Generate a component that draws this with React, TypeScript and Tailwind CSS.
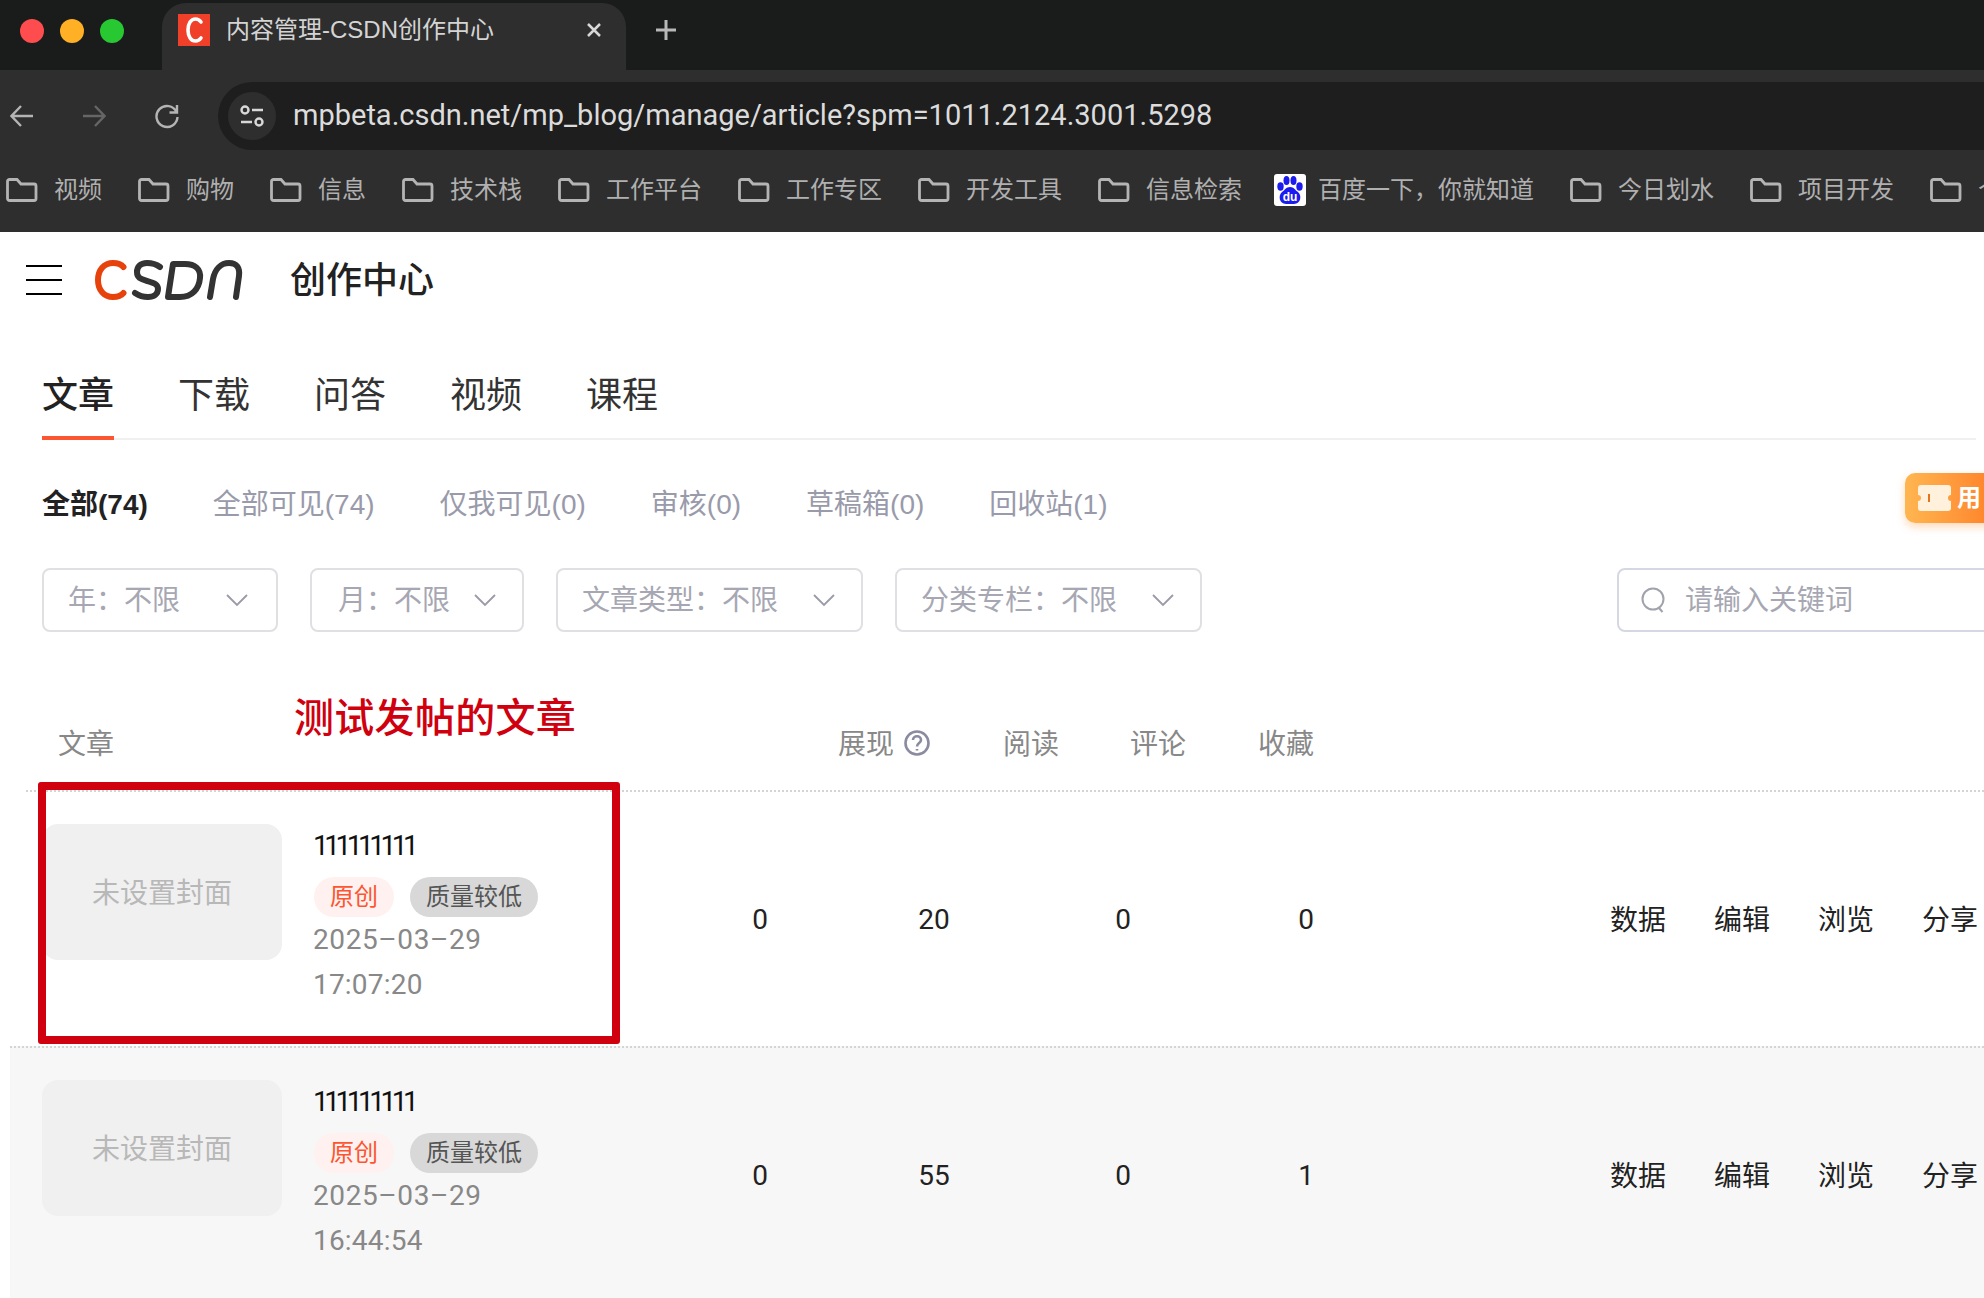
import React from 'react';

const cjk = "font-['Liberation_Sans','Noto_Sans_CJK_SC',sans-serif]";
const num = "font-['Roboto','Noto_Sans_CJK_SC',sans-serif]";

const bookmarks = ['视频', '购物', '信息', '技术栈', '工作平台', '工作专区', '开发工具', '信息检索'];
const bookmarksAfter = ['今日划水', '项目开发', '个人'];
const tabs = ['文章', '下载', '问答', '视频', '课程'];
const subTabs = ['全部可见(74)', '仅我可见(0)', '审核(0)', '草稿箱(0)', '回收站(1)'];
const actions = ['数据', '编辑', '浏览', '分享'];

const FolderIcon = () => (
  <svg width="32" height="24" viewBox="0 0 32 24" fill="none" stroke="#b4b4b4" strokeWidth="2.800" className="shrink-0">
    <path d="M1.500 3.500a2 2 0 0 1 2-2h7.500l4 4.500h13a2 2 0 0 1 2 2v12.500a2 2 0 0 1-2 2h-24.500a2 2 0 0 1-2-2z" />
  </svg>
);

const BaiduIcon = () => (
  <svg width="32" height="32" viewBox="0 0 32 32" className="shrink-0">
    <rect width="32" height="32" rx="3" fill="#fff" />
    <g fill="#1c1cf0">
      <ellipse cx="6.500" cy="12.500" rx="3.200" ry="4.200" />
      <ellipse cx="12.500" cy="6.500" rx="3" ry="4.500" />
      <ellipse cx="19.500" cy="6.500" rx="3" ry="4.500" />
      <ellipse cx="25.500" cy="12.500" rx="3.200" ry="4.200" />
      <path d="M16 13c4 0 5 3 8 5 4 3 3 12-4 12H12c-7 0-8-9-4-12 3-2 4-5 8-5z" />
    </g>
    <text x="16" y="27" textAnchor="middle" fontSize="12" fontWeight="700" fill="#fff" fontFamily="Liberation Sans">du</text>
  </svg>
);

const Chevron = () => (
  <svg width="22" height="13" viewBox="0 0 22 13" fill="none" stroke="#9a9aa8" strokeWidth="1.800" className="shrink-0">
    <path d="M1 1l10 10L21 1" />
  </svg>
);

const Logo = () => (
  <svg width="150" height="42" viewBox="0 0 150 42" fill="none" strokeWidth="6" strokeLinecap="round" strokeLinejoin="round">
    <path d="M29.500 8C27 5 23 4 19 4 10 4 4 11 4 21s6 17 15 17c4 0 8-1 10.500-4" stroke="#e8420c" />
    <path d="M66 8c-4-3-8-4-13-4-7 0-10 4-10 9 0 6 4 7 10 9 7 2 11 3 11 8 0 5-4 8-10 8-5 0-10-2-13-4" stroke="#333" />
    <path d="M79 5h12c10 0 16 5 15 14-1 11-8 19-20 19H74z" stroke="#333" />
    <path d="M116 38l3-18c2-10 8-16 16-16 8 0 11 5 10 13l-3 21" stroke="#333" />
  </svg>
);

const Filter = ({ label, className }: { label: string; className: string }) => (
  <div className={`flex h-16 shrink-0 items-center justify-between rounded-lg border-2 border-[#e0e0e4] text-[28px] text-[#a6a7b2] ${className}`}>
    <span className="pt-[2px]">{label}</span>
    <Chevron />
  </div>
);

const Article = ({ time, stats, dark }: { time: string; stats: string[]; dark?: boolean }) => (
  <div className={`flex h-[256px] border-t-2 border-dotted border-[#d4d4d4] ${dark ? 'ml-[10px] bg-[#f7f7f7] pl-8' : 'ml-[26px] pl-4'}`}>
    <div className="mt-8 flex h-[136px] w-60 items-center justify-center rounded-2xl bg-[#f0f0f0] pt-1 text-[28px] text-[#b8b8b8]">未设置封面</div>
    <div className="ml-8 w-[346px] pt-[34px]">
      <div className={`-ml-px text-[28px] leading-10 tracking-[-4.500px] text-[#111] ${num}`}>111111111</div>
      <div className="mt-[11px] flex gap-4 text-2xl leading-10">
        <span className="rounded-full bg-[#fff1ef] px-4 text-[#fc5531]">原创</span>
        <span className="rounded-full bg-[#d8d8d8] px-4 text-[#555]">质量较低</span>
      </div>
      <div className={`-ml-px text-[28px] leading-[45px] tracking-[0.6px] text-[#888] ${num}`}>2025–03–29</div>
      <div className={`-ml-px text-[28px] leading-[45px] tracking-[0.2px] text-[#888] ${num}`}>{time}</div>
    </div>
    <div className="flex flex-1 items-center text-[28px] text-[#222]">
      <span className={`w-[200px] pt-[2px] text-center ${num}`}>{stats[0]}</span>
      <span className={`w-[148px] pt-[2px] text-center ${num}`}>{stats[1]}</span>
      <span className={`w-[230px] pt-[2px] text-center ${num}`}>{stats[2]}</span>
      <span className={`w-[136px] pt-[2px] text-center ${num}`}>{stats[3]}</span>
      <div className="ml-auto flex gap-12 pr-[6px] pt-1">
        {actions.map((a) => <span key={a}>{a}</span>)}
      </div>
    </div>
  </div>
);

export default function App() {
  return (
    <div className={`relative h-[1298px] w-[1984px] overflow-hidden bg-white ${cjk}`}>
      {/* tab strip */}
      <div className="flex h-[70px] bg-[#1a1c1b]">
        <div className="flex w-[162px] shrink-0 items-center gap-4 pb-2 pl-5">
          <span className="h-6 w-6 rounded-full bg-[#ff4d4f]" />
          <span className="h-6 w-6 rounded-full bg-[#ffb024]" />
          <span className="h-6 w-6 rounded-full bg-[#28c832]" />
        </div>
        <div className="mt-[3px] flex h-[67px] w-[464px] items-center rounded-t-3xl bg-[#2e2e2e] pb-[13px] pl-4">
          <svg width="32" height="32" viewBox="0 0 32 32" className="shrink-0">
            <rect width="32" height="32" fill="#f0402a" />
            <path d="M23 8c-1.500-2-3.500-3-5.500-3C13 5 10 9.500 10 16s3 11 7.500 11c2 0 4-1 5.500-3" fill="none" stroke="#fff" strokeWidth="3.600" strokeLinecap="round" />
          </svg>
          <span className="ml-4 text-2xl text-[#d4d4d4]">内容管理-CSDN创作中心</span>
          <svg width="16" height="16" viewBox="0 0 16 16" stroke="#d8d8d8" strokeWidth="2.500" className="ml-auto mr-6">
            <path d="M2 2l12 12M14 2L2 14" />
          </svg>
        </div>
        <svg width="24" height="24" viewBox="0 0 24 24" stroke="#b8b8b8" strokeWidth="3" className="ml-7 mt-[18px]">
          <path d="M12 2v20M2 12h20" />
        </svg>
      </div>

      {/* toolbar */}
      <div className="h-[162px] bg-[#2e2e2e]">
        <div className="flex h-[80px] items-center pt-3">
          <div className="flex w-[218px] shrink-0 items-center pl-[10px]">
            <svg width="24" height="24" viewBox="0 0 24 24" fill="none" stroke="#b4b4b4" strokeWidth="2.400">
              <path d="M23 12H2M11 2L1.500 12l9.500 10" />
            </svg>
            <svg width="24" height="24" viewBox="0 0 24 24" fill="none" stroke="#666" strokeWidth="2.400" className="ml-12">
              <path d="M1 12h21M13 2l9.500 10L13 22" />
            </svg>
            <svg width="26" height="26" viewBox="0 0 26 26" fill="none" stroke="#b4b4b4" strokeWidth="2.400" className="ml-12">
              <path d="M22.500 9A10.500 10.500 0 1 0 23.500 14M23 2v7.500h-7.500" />
            </svg>
          </div>
          <div className="flex h-[68px] flex-1 items-center rounded-l-[34px] bg-[#1e1e1e] pl-[10px]">
            <span className="flex h-12 w-12 items-center justify-center rounded-full bg-[#2e2e2e]">
              <svg width="24" height="24" viewBox="0 0 24 24" fill="none" stroke="#d8d8d8" strokeWidth="2.400">
                <circle cx="5" cy="6" r="3.500" />
                <path d="M12 6h11M1 18h11" />
                <circle cx="19" cy="18" r="3.500" />
              </svg>
            </span>
            <span className={`ml-[17px] text-[29px] text-[#dcdcdc] ${num}`}>mpbeta.csdn.net/mp_blog/manage/article?spm=1011.2124.3001.5298</span>
          </div>
        </div>
        <div className="flex h-[82px] items-center gap-9 whitespace-nowrap pb-[2px] pl-[6px] text-2xl text-[#b0b0b0]">
          {bookmarks.map((b) => (
            <div key={b} className="flex items-center gap-4"><FolderIcon />{b}</div>
          ))}
          <div className="-ml-[4px] flex items-center gap-3"><BaiduIcon />百度一下，你就知道</div>
          {bookmarksAfter.map((b) => (
            <div key={b} className="flex items-center gap-4"><FolderIcon />{b}</div>
          ))}
        </div>
      </div>

      {/* page header */}
      <div className="flex h-24 items-center pl-[26px]">
        <div className="flex w-9 flex-col gap-[12px]">
          <span className="h-[2px] bg-black" />
          <span className="h-[2px] bg-black" />
          <span className="h-[2px] bg-black" />
        </div>
        <div className="ml-8"><Logo /></div>
        <div className="ml-[46px] pt-[2px] text-4xl font-medium text-[#222]">创作中心</div>
      </div>

      <div className="ml-[42px] mr-2">
        <div className="flex h-28 gap-16 border-b-2 border-[#f0f0f0]">
          {tabs.map((t, i) => (
            <div key={t} className={`-mb-[2px] h-28 pt-[50px] text-4xl leading-9 ${i === 0 ? 'border-b-4 border-[#fc5531] font-medium text-[#222]' : 'text-[#333]'}`}>{t}</div>
          ))}
        </div>
        <div className="mt-[45px] flex gap-[65px] text-[28px] leading-10 text-[#999aaa]">
          <span className="font-semibold text-[#222]">全部(74)</span>
          {subTabs.map((t) => <span key={t}>{t}</span>)}
        </div>
        <div className="mt-[43px] flex gap-8">
          <Filter label="年：不限" className="w-[236px] pl-6 pr-7" />
          <Filter label="月：不限" className="w-[214px] pl-[26px] pr-[26px]" />
          <Filter label="文章类型：不限" className="w-[307px] pl-6 pr-[26px]" />
          <Filter label="分类专栏：不限" className="w-[307px] pl-6 pr-[26px]" />
          <div className="ml-[383px] flex h-16 w-[400px] shrink-0 items-center gap-5 rounded-lg border-2 border-[#d5d8e4] pl-[22px] text-[28px] text-[#a6a7b2]">
            <svg width="24" height="26" viewBox="0 0 24 26" fill="none" stroke="#a0a3ad" strokeWidth="2">
              <circle cx="12" cy="12" r="10.500" />
              <path d="M18 21l3.500 4" />
            </svg>
            <span className="pt-[2px]">请输入关键词</span>
          </div>
        </div>
      </div>

      {/* table head */}
      <div className="ml-[58px] mt-[91px] flex h-[67px] pt-[2px] text-[28px] leading-10 text-[#888]">
        <span className="w-[780px]">文章</span>
        <span className="flex w-[165px] gap-[10px]">
          展现
          <svg width="26" height="38" viewBox="0 0 26 38" fill="none" stroke="#8a8aa0" strokeWidth="2.600">
            <circle cx="13" cy="18" r="11.500" />
            <path d="M9 15c0-5 8-5 8 0 0 3-4 3-4 6.500M13 24v1.500" />
          </svg>
        </span>
        <span className="w-[127px]">阅读</span>
        <span className="w-[128px]">评论</span>
        <span>收藏</span>
      </div>

      <Article time="17:07:20" stats={['0', '20', '0', '0']} />
      <Article time="16:44:54" stats={['0', '55', '0', '1']} dark />

      {/* annotation drawn on top of the screenshot */}
      <div className="absolute left-[294px] top-[696px] text-[40px] font-medium leading-[44px] tracking-[0.3px] text-[#d0000f]">测试发帖的文章</div>
      <div className="absolute left-[38px] top-[782px] h-[262px] w-[582px] rounded-[3px] border-8 border-[#d0000f]" />

      {/* floating coupon */}
      <div className="absolute left-[1905px] top-[473px] flex h-[50px] w-[100px] items-center gap-[6px] rounded-[10px] bg-gradient-to-r from-[#ffb650] to-[#ff7a22] pl-[13px] text-2xl font-bold text-white shadow-[0_4px_8px_rgba(255,150,60,0.35)]">
        <svg width="33" height="26" viewBox="0 0 33 26" className="shrink-0">
          <path d="M3 0h27a3 3 0 0 1 3 3v7a3 3 0 0 0 0 6v7a3 3 0 0 1-3 3H3a3 3 0 0 1-3-3v-7a3 3 0 0 0 0-6V3a3 3 0 0 1 3-3z" fill="#fff1dc" />
          <path d="M11 9v8" stroke="#e2761f" strokeWidth="2" />
        </svg>
        用
      </div>
    </div>
  );
}
